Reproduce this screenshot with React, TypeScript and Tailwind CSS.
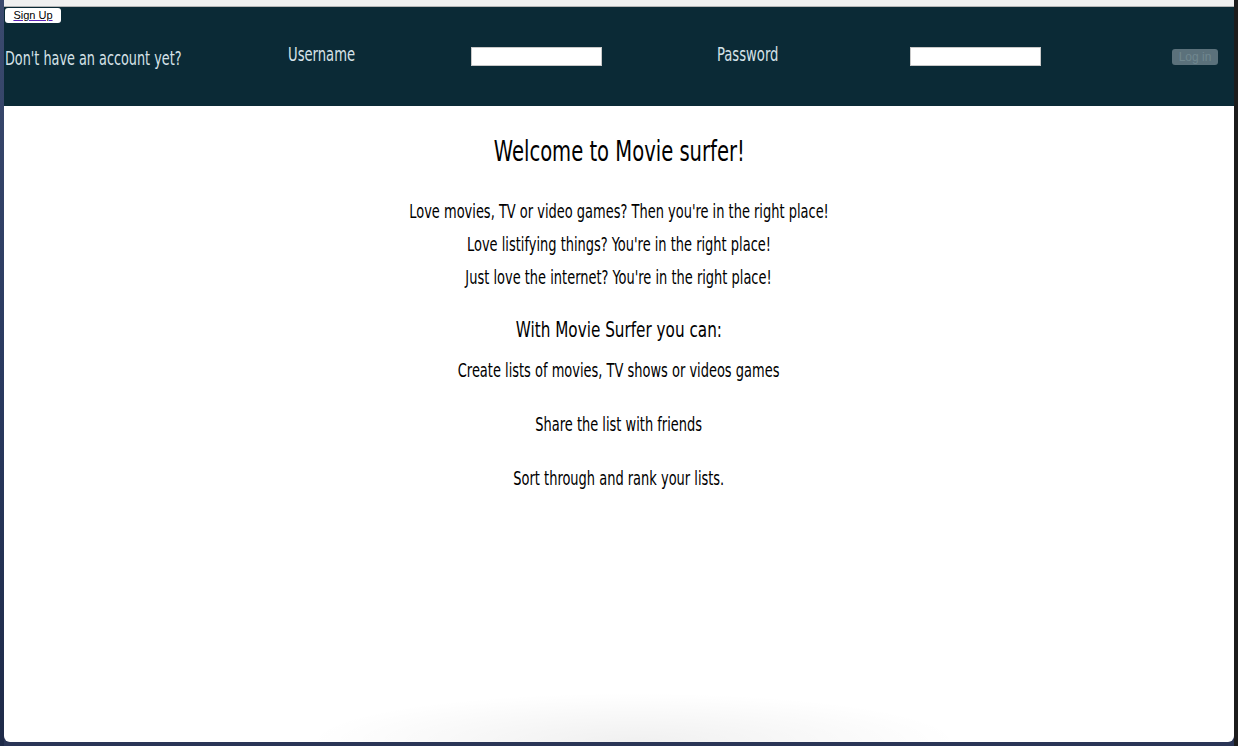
import React from "react";

const F = { fontFamily: "'Liberation Sans Narrow', 'DejaVu Sans Condensed', 'Liberation Sans', sans-serif" };

export default function App() {
  return (
    <div className="w-[1238px] h-[746px] overflow-hidden flex bg-[#2a3556]">
      <div className="w-[4px] h-full bg-gradient-to-b from-[#3b4a6e] via-[#2a3a60] to-[#1e2a48]" />
      <div className="w-[1230px] h-[742px] bg-white rounded-b-[6px] flex flex-col overflow-hidden relative">
        <div className="h-[7px] bg-[#f0f0f0] border-b border-[#b5b5b5]" />
        <header className="h-[99px] bg-[#0b2a36] flex flex-col">
          <div className="flex pl-[1px] pt-[1px]">
            <button className="h-[15px] w-[56px] bg-white rounded-[3px] text-[11px] leading-[15px] text-black underline decoration-[#5b21b6]" style={{ fontFamily: "'Liberation Sans', Arial, sans-serif" }}>
              Sign Up
            </button>
          </div>
          <div className="flex items-start pl-[1px] mt-[20px] text-[#d6e2e8]" style={F}>
            <div className="w-[283px]">
              <span className="block text-[19px] leading-[22px] mt-[4px] origin-left scale-x-[0.75] whitespace-nowrap">Don't have an account yet?</span>
            </div>
            <div className="w-[183px]">
              <span className="block text-[19px] leading-[22px] origin-left scale-x-[0.77] whitespace-nowrap">Username</span>
            </div>
            <input className="w-[131px] h-[19px] mt-[4px] bg-white border border-[#c8c8c8]" />
            <span className="w-[115px]" />
            <div className="w-[193px]">
              <span className="block text-[19px] leading-[22px] origin-left scale-x-[0.77] whitespace-nowrap">Password</span>
            </div>
            <input type="password" className="w-[131px] h-[19px] mt-[4px] bg-white border border-[#c8c8c8]" />
            <span className="w-[131px]" />
            <button disabled className="w-[46px] h-[16px] mt-[6px] rounded-[3px] bg-[#5b717b] text-[#70878f] text-[12px] leading-[16px]" style={{ fontFamily: "'Liberation Sans', Arial, sans-serif" }}>
              Log in
            </button>
          </div>
        </header>
        <main className="flex flex-col items-center text-black pt-[28px]" style={F}>
          <h1 className="text-[29px] leading-[34px] scale-x-[0.75] whitespace-nowrap">Welcome to Movie surfer!</h1>
          <div className="mt-[32px] flex flex-col items-center gap-[11px] text-[19px] leading-[22px]">
            <p className="scale-x-[0.76] whitespace-nowrap">Love movies, TV or video games? Then you're in the right place!</p>
            <p className="scale-x-[0.76] whitespace-nowrap">Love listifying things? You're in the right place!</p>
            <p className="scale-x-[0.76] whitespace-nowrap">Just love the internet? You're in the right place!</p>
          </div>
          <h2 className="mt-[29px] text-[22px] leading-[26px] scale-x-[0.77] whitespace-nowrap">With Movie Surfer you can:</h2>
          <div className="mt-[16px] flex flex-col items-center gap-[32px] text-[19px] leading-[22px]">
            <p className="scale-x-[0.76] whitespace-nowrap">Create lists of movies, TV shows or videos games</p>
            <p className="scale-x-[0.76] whitespace-nowrap">Share the list with friends</p>
            <p className="scale-x-[0.76] whitespace-nowrap">Sort through and rank your lists.</p>
          </div>
        </main>
        <div className="absolute left-[300px] bottom-0 w-[660px] h-[50px] bg-[radial-gradient(ellipse_at_bottom,rgba(0,0,0,0.06),rgba(0,0,0,0)_70%)] pointer-events-none" />
      </div>
      <div className="w-[4px] h-full bg-[#1c1c1c]" />
    </div>
  );
}
